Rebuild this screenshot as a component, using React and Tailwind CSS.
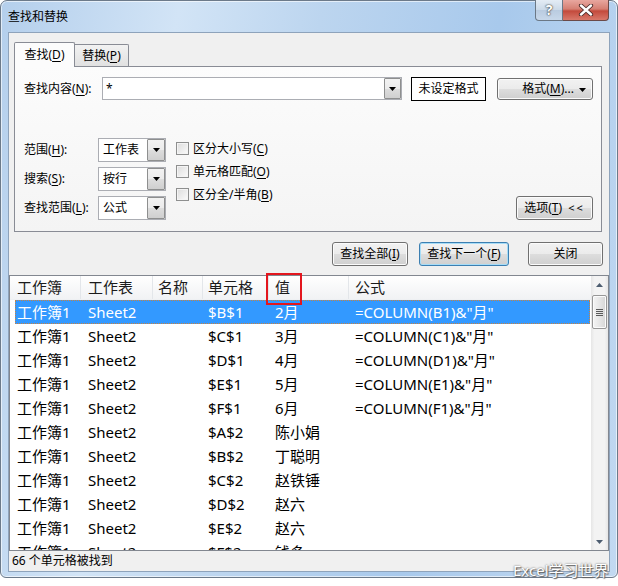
import React from "react";

const U = ({ children }) => <span className="underline underline-offset-[2px] decoration-1">{children}</span>;

const Arrow = ({ className = "" }) => (
  <svg width="7" height="4" viewBox="0 0 7 4" className={className}>
    <path d="M0 0H7L3.5 4Z" fill="#000" />
  </svg>
);

const DropBtn = ({ w = "w-[17px]" }) => (
  <div className={`${w} h-full border border-[#8e8f8f] rounded-[1px] bg-[linear-gradient(to_bottom,#f2f2f2_0%,#ebebeb_50%,#dddddd_51%,#cfcfcf_100%)] flex items-center justify-center`}>
    <Arrow />
  </div>
);

const Btn = ({ w, h = "h-[24px]", children, focused, className = "" }) => (
  <div
    className={`${w} ${h} ${className} rounded-[3px] border ${
      focused
        ? "border-[#3c7fb1] shadow-[inset_0_0_0_1px_#a6dcf7]"
        : "border-[#707070] shadow-[inset_0_0_0_1px_#fbfbfb]"
    } bg-[linear-gradient(to_bottom,#f2f2f2_0%,#ebebeb_50%,#dddddd_51%,#cfcfcf_100%)] flex items-center justify-center text-[12px]`}
  >
    {children}
  </div>
);

const Select = ({ value }) => (
  <div className="w-[68px] h-[24px] border border-[#abadb3] bg-white flex">
    <div className="flex-1 flex items-center pl-[4px] text-[12px]">{value}</div>
    <DropBtn w="w-[18px]" />
  </div>
);

const Check = ({ children }) => (
  <div className="h-[23px] flex items-center">
    <div className="w-[13px] h-[13px] border border-[#8e8f8f] bg-[linear-gradient(135deg,#dcdcdc,#fbfbfb)] shadow-[inset_0_0_0_1px_#f4f4f4]" />
    <div className="ml-[4px] text-[12px]">{children}</div>
  </div>
);

const rows = [
  ["工作簿1", "Sheet2", "", "$B$1", "2月", '=COLUMN(B1)&"月"'],
  ["工作簿1", "Sheet2", "", "$C$1", "3月", '=COLUMN(C1)&"月"'],
  ["工作簿1", "Sheet2", "", "$D$1", "4月", '=COLUMN(D1)&"月"'],
  ["工作簿1", "Sheet2", "", "$E$1", "5月", '=COLUMN(E1)&"月"'],
  ["工作簿1", "Sheet2", "", "$F$1", "6月", '=COLUMN(F1)&"月"'],
  ["工作簿1", "Sheet2", "", "$A$2", "陈小娟", ""],
  ["工作簿1", "Sheet2", "", "$B$2", "丁聪明", ""],
  ["工作簿1", "Sheet2", "", "$C$2", "赵铁锤", ""],
  ["工作簿1", "Sheet2", "", "$D$2", "赵六", ""],
  ["工作簿1", "Sheet2", "", "$E$2", "赵六", ""],
  ["工作簿1", "Sheet2", "", "$F$2", "钱多", ""],
];

const cols = [
  { w: "w-[66px]", pl: "pl-[2px]" },
  { w: "w-[72px]", pl: "pl-[7px]" },
  { w: "w-[50px]", pl: "pl-[5px]" },
  { w: "w-[66px]", pl: "pl-[5px]" },
  { w: "w-[80px]", pl: "pl-[6px]" },
  { w: "flex-1", pl: "pl-[6px]" },
];

const headers = ["工作簿", "工作表", "名称", "单元格", "值", "公式"];

export default function App() {
  return (
    <div className="relative w-[618px] h-[586px] bg-white overflow-hidden font-['Noto_Sans','Noto_Sans_CJK_SC',sans-serif] text-black">
      <div className="flex flex-col w-[618px] h-[578px] rounded-t-[7px] rounded-b-[6px] border border-[#6c7a8a] bg-[linear-gradient(100deg,#b4cfec_0%,#d2e4f6_25%,#bcd5ef_45%,#a8c9ec_70%,#c2d9f1_100%)] shadow-[inset_0_0_0_1px_rgba(255,255,255,0.6)]">
        {/* title bar */}
        <div className="flex h-[31px] shrink-0">
          <div className="flex-1 pl-[7px] pt-[7px] text-[12px] leading-[18px] text-black">查找和替换</div>
          <div className="flex self-start -mt-px mr-[8px]">
            <div className="w-[28px] h-[21px] rounded-bl-[4px] border border-t-0 border-[#6b7886] bg-[linear-gradient(to_bottom,#e4ecf5_0%,#cbd9e8_50%,#b9cbe0_51%,#c8d8ea_100%)] flex items-center justify-center">
              <span className="text-white text-[14px] font-bold leading-none [text-shadow:0_0_2px_#333,0_0_1px_#333]">?</span>
            </div>
            <div className="w-[46px] h-[21px] rounded-br-[4px] border border-l-0 border-t-0 border-[#6b4a48] bg-[linear-gradient(to_bottom,#e8a79f_0%,#d57f73_45%,#c34a3c_55%,#d8786a_100%)] flex items-center justify-center">
              <svg width="16" height="12" viewBox="0 0 16 12">
                <path d="M3 1.5L13 10.5M13 1.5L3 10.5" stroke="#4a2a28" strokeWidth="4.2" strokeLinecap="round" />
                <path d="M3 1.5L13 10.5M13 1.5L3 10.5" stroke="#fff" strokeWidth="2.4" strokeLinecap="round" />
              </svg>
            </div>
          </div>
        </div>

        {/* client area */}
        <div className="mx-[7px] h-[540px] shrink-0 border border-[#8ea3bb] bg-[#f0f0f0] flex flex-col">
          {/* tabs */}
          <div className="ml-[5px] mt-[9px] flex h-[24px] shrink-0">
            <div className="relative z-10 w-[61px] h-[25px] border border-b-0 border-[#898c95] rounded-t-[2px] bg-[#fcfcfc] flex items-center justify-center text-[12px] pb-[1px]">
              查找(<U>D</U>)
            </div>
            <div className="mt-[2px] w-[54px] h-[22px] border border-l-0 border-b-0 border-[#898c95] rounded-tr-[2px] bg-[linear-gradient(to_bottom,#f2f2f2,#e1e1e1)] flex items-center justify-center text-[12px]">
              替换(<U>P</U>)
            </div>
          </div>

          {/* panel */}
          <div className="ml-[5px] w-[588px] h-[166px] shrink-0 border border-[#898c95] bg-[linear-gradient(to_bottom,#fcfcfc,#f4f4f4)] flex flex-col">
            <div className="mt-[10px] h-[24px] flex items-start">
              <div className="ml-[9px] w-[78px] h-[23px] flex items-center text-[12px]">
                查找内容(<U>N</U>):
              </div>
              <div className="w-[300px] h-[23px] border border-[#abadb3] bg-white flex">
                <div className="flex-1 flex items-center pl-[3px] text-[12px]">*</div>
                <DropBtn />
              </div>
              <div className="ml-[9px] w-[75px] h-[24px] border border-black bg-white flex items-center justify-center text-[12px]">
                未设定格式
              </div>
              <Btn w="w-[96px]" h="h-[22px]" className="ml-[11px] mt-[1px] relative">
                <span className="ml-[6px]">格式(<U>M</U>)...</span>
                <Arrow className="absolute right-[6px] top-[9px]" />
              </Btn>
            </div>

            <div className="mt-[36px] h-[83px] flex items-start">
              <div className="ml-[9px] mt-[1px] flex flex-col gap-[5px]">
                <div className="flex items-center h-[24px]">
                  <div className="w-[74px] text-[12px]">范围(<U>H</U>):</div>
                  <Select value="工作表" />
                </div>
                <div className="flex items-center h-[24px]">
                  <div className="w-[74px] text-[12px]">搜索(<U>S</U>):</div>
                  <Select value="按行" />
                </div>
                <div className="flex items-center h-[24px]">
                  <div className="w-[74px] text-[12px]">查找范围(<U>L</U>):</div>
                  <Select value="公式" />
                </div>
              </div>
              <div className="ml-[10px] flex flex-col">
                <Check>区分大小写(<U>C</U>)</Check>
                <Check>单元格匹配(<U>O</U>)</Check>
                <Check>区分全/半角(<U>B</U>)</Check>
              </div>
              <div className="flex-1" />
              <Btn w="w-[77px]" className="self-end mr-[8px]">
                选项(<U>T</U>)<span className="ml-[6px] tracking-[2px] text-[11px]">&lt;&lt;</span>
              </Btn>
            </div>
          </div>

          {/* buttons */}
          <div className="mt-[10px] h-[24px] shrink-0 flex justify-end pr-[6px]">
            <Btn w="w-[76px]">查找全部(<U>I</U>)</Btn>
            <Btn w="w-[90px]" focused className="ml-[11px]">查找下一个(<U>F</U>)</Btn>
            <Btn w="w-[75px]" className="ml-[19px]">关闭</Btn>
          </div>

          {/* list */}
          <div className="relative mt-[9px] h-[276px] shrink-0 border border-[#828790] bg-white flex">
            <div className="flex-1 flex flex-col overflow-hidden">
              <div className="h-[24px] shrink-0 bg-[linear-gradient(to_bottom,#ffffff,#f1f2f4)] border-b border-[#eef0f3]">
                <div className="ml-[5px] flex h-full">
                  {headers.map((h, i) => (
                    <div
                      key={i}
                      className={`${cols[i].w} ${cols[i].pl} ${i < 5 ? "border-r border-[#e3e6ea]" : ""} h-full flex items-center text-[15px] text-[#1b1b1b]`}
                    >
                      {h}
                    </div>
                  ))}
                </div>
              </div>
              {rows.map((r, ri) => {
                const sel = ri === 0;
                return (
                  <div
                    key={ri}
                    className={`ml-[5px] mr-[1px] h-[24px] shrink-0 flex ${
                      sel ? "bg-[#3399ff] text-white outline-1 outline-dotted outline-[#c9823f] -outline-offset-1" : "text-black"
                    }`}
                  >
                    {r.map((c, ci) => (
                      <div
                        key={ci}
                        className={`${cols[ci].w} ${cols[ci].pl} ${ci < 5 ? "border-r border-transparent" : ""} h-full flex items-center text-[15px] whitespace-nowrap`}
                      >
                        {c}
                      </div>
                    ))}
                  </div>
                );
              })}
            </div>
            {/* scrollbar */}
            <div className="w-[17px] h-full flex flex-col bg-[linear-gradient(to_right,#e6e6e6,#f3f3f3_20%,#f3f3f3_80%,#e6e6e6)]">
              <div className="h-[17px] flex items-center justify-center">
                <svg width="7" height="4" viewBox="0 0 7 4">
                  <path d="M0 4H7L3.5 0Z" fill="#4d5d70" />
                </svg>
              </div>
              <div className="mt-[2px] mx-[1px] h-[34px] rounded-[2px] border border-[#979797] bg-[linear-gradient(to_right,#f4f4f4,#e6e6e6_50%,#d6d6d6)] shadow-[inset_0_0_0_1px_#fbfbfb] flex flex-col items-center justify-center gap-[1px]">
                <div className="w-[7px] h-[1px] bg-[#5a5a5a]" />
                <div className="w-[7px] h-[1px] bg-[#5a5a5a]" />
                <div className="w-[7px] h-[1px] bg-[#5a5a5a]" />
                <div className="w-[7px] h-[1px] bg-[#5a5a5a]" />
              </div>
              <div className="flex-1" />
              <div className="h-[17px] flex items-center justify-center">
                <svg width="7" height="4" viewBox="0 0 7 4">
                  <path d="M0 0H7L3.5 4Z" fill="#4d5d70" />
                </svg>
              </div>
            </div>
            {/* red highlight */}
            <div className="absolute left-[256px] top-[-3px] w-[36px] h-[32px] border-2 border-[#e3161e]" />
          </div>

          {/* status */}
          <div className="h-[20px] shrink-0 flex items-center pl-[3px] text-[12px]">66 个单元格被找到</div>
        </div>
      </div>

      <div className="absolute left-[513px] top-[560px] text-[15px] leading-[20px] text-white [text-shadow:0_0_2px_#555,1px_1px_1px_#666]">
        Excel学习世界
      </div>
    </div>
  );
}
